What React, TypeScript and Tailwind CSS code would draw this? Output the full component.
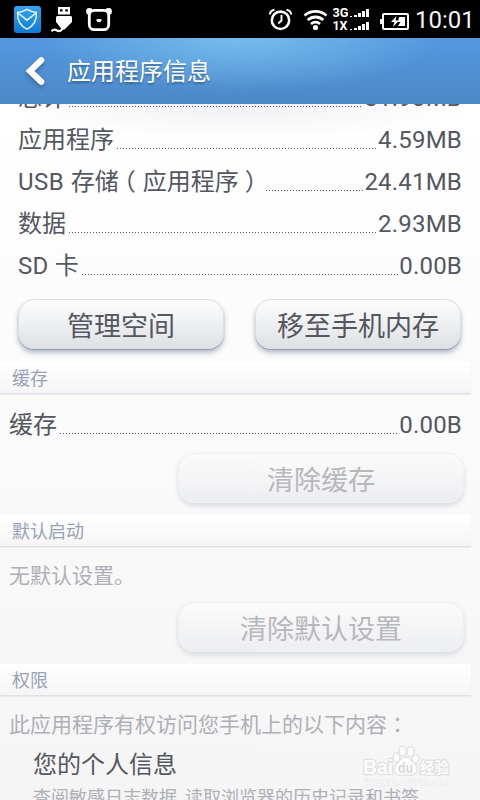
import type { ReactNode } from "react";

export default function App() {
  return (
    <div className="relative flex h-[800px] w-[480px] flex-col overflow-hidden bg-[#fafafa] font-['Roboto','Noto_Sans_CJK_SC',sans-serif] text-[#54575f]">
      <StatusBar />
      <TitleBar title="应用程序信息" />
      <main className="min-h-0 flex-1 overflow-hidden bg-[radial-gradient(ellipse_230px_36px_at_50%_0,#eff0f2,transparent),linear-gradient(#ffffff,#fbfbfb_40%,#f5f5f5)]">
        <div className="-mt-[27px] px-[18px]">
          <SizeRow label="总计" value="31.93MB" />
          <SizeRow label="应用程序" value="4.59MB" />
          <SizeRow
            label={
              <>
                <span className="tracking-[0.5px]">USB </span>
                存储
                <span className="inline-block -translate-x-[7px]">（</span>
                应用程序
                <span className="inline-block translate-x-[6px]">）</span>
              </>
            }
            value="24.41MB"
          />
          <SizeRow label="数据" value="2.93MB" />
          <SizeRow
            label={
              <>
                <span className="tracking-[0.3px]">SD </span>卡
              </>
            }
            value="0.00B"
          />
        </div>

        <div className="mt-3 flex justify-between pr-[19px] pl-[18px]">
          <Button className="w-[206px]">管理空间</Button>
          <Button className="w-[206px]">移至手机内存</Button>
        </div>

        <SectionHeader className="mt-[13px]">缓存</SectionHeader>
        <div className="mt-[10px] pr-[18px] pl-[9px]">
          <SizeRow label="缓存" value="0.00B" />
        </div>
        <div className="mt-[7px] flex justify-end pr-4">
          <Button disabled className="w-[286px]">
            清除缓存
          </Button>
        </div>

        <SectionHeader className="mt-3">默认启动</SectionHeader>
        <p className="mt-[14px] pl-[9px] text-[21px] leading-[30px] text-[#adb0b5]">
          无默认设置。
        </p>
        <div className="mt-[11px] flex justify-end pr-4">
          <Button disabled className="w-[286px]">
            清除默认设置
          </Button>
        </div>

        <SectionHeader className="mt-3">权限</SectionHeader>
        <p className="mt-[14px] h-[30px] pl-[9px] text-[21px] leading-[30px] whitespace-nowrap text-[#adb0b5]">
          此应用程序有权访问您手机上的以下内容
          <span
            className="font-['Noto_Sans_CJK_TC',sans-serif] leading-none"
            lang="zh-TW"
          >
            ：
          </span>
        </p>
        <h3 className="mt-[9px] pl-[33px] text-2xl leading-8 font-normal">
          您的个人信息
        </h3>
        <p className="mt-[5px] pl-[33px] text-lg leading-6 whitespace-nowrap text-[#adb0b5]">
          查阅敏感日志数据, 读取浏览器的历史记录和书签
        </p>
      </main>
      <Watermark />
    </div>
  );
}

function TitleBar({ title }: { title: string }) {
  return (
    <header className="flex h-[66px] shrink-0 items-center bg-[radial-gradient(ellipse_200px_54px_at_50%_0,#76bdec,transparent),linear-gradient(#5398e0,#4d88c7)] pl-[22px] text-white">
      <svg
        width="26"
        height="36"
        viewBox="0 0 26 36"
        fill="none"
        className="drop-shadow-[0_2px_2px_rgba(0,0,0,0.3)]"
      >
        <path
          d="M19.2 7.200 8 18l11.200 10.800"
          stroke="#fff"
          strokeWidth="6.200"
          strokeLinecap="round"
          strokeLinejoin="miter"
        />
      </svg>
      <h1 className="ml-[19px] pt-0.5 text-2xl font-normal [text-shadow:0_2px_2px_rgba(0,0,0,0.3)]">
        {title}
      </h1>
    </header>
  );
}

interface SizeRowProps {
  label: ReactNode;
  value: string;
}

function SizeRow({ label, value }: SizeRowProps) {
  return (
    <div className="flex h-[42px] text-2xl leading-[42px] whitespace-nowrap">
      <span>{label}</span>
      <span className="mt-[29px] ml-[3px] h-px flex-1 bg-[repeating-linear-gradient(90deg,#54575f_0_1px,transparent_1px_3px)]" />
      <span className="ml-px tracking-[0.2px]">{value}</span>
    </div>
  );
}

interface ButtonProps {
  children: ReactNode;
  className: string;
  disabled?: boolean;
}

function Button({ children, className, disabled }: ButtonProps) {
  const look = disabled
    ? "border-[#eeeff0] bg-linear-to-b from-[#fbfbfb] to-[#edeef0] text-[#b6b8bb] shadow-[0_3px_5px_rgba(90,105,130,0.2)]"
    : "border-[#dcdee1] bg-linear-to-b from-[#fdfdfd] to-[#dee1e5] text-[#54575f] shadow-[0_1px_1px_rgba(80,90,110,0.4),0_4px_5px_rgba(80,100,135,0.4)]";
  return (
    <button
      disabled={disabled}
      className={`h-[50px] rounded-[16px] border pt-[6px] text-[27px] leading-[42px] ${look} ${className}`}
    >
      {children}
    </button>
  );
}

function SectionHeader({
  children,
  className,
}: {
  children: ReactNode;
  className: string;
}) {
  return (
    <h2
      className={`h-8 w-[471px] border-b border-[#dde1e5] bg-linear-to-b from-white to-[#f5f5f5] pl-3 text-lg leading-[34px] font-normal text-[#97a2b8] shadow-[0_1px_1px_#e9edf1] ${className}`}
    >
      {children}
    </h2>
  );
}

function StatusBar() {
  return (
    <div className="flex h-[38px] shrink-0 items-center bg-black pl-[14px] text-white">
      {/* security guard */}
      <svg width="27" height="38" viewBox="14 0 27 38" fill="none">
        <defs>
          <linearGradient id="guard" x1="0" y1="0" x2="0" y2="1">
            <stop stopColor="#36a3f3" />
            <stop offset="1" stopColor="#0b7bd5" />
          </linearGradient>
        </defs>
        <rect x="14" y="6" width="27" height="27" rx="3" fill="url(#guard)" />
        <path
          d="M27 9.300c3 1.800 6 2.800 9.300 3.200.6 7-2.500 13.200-9.300 16.700-6.800-3.500-9.900-9.700-9.300-16.700 3.300-.4 6.300-1.400 9.300-3.200zM18 13l9 7.200 9-7.200"
          stroke="#e9f4fd"
          strokeWidth="1.500"
        />
      </svg>
      {/* usb */}
      <svg
        width="22"
        height="38"
        viewBox="51 0 22 38"
        fill="none"
        className="ml-[10px]"
      >
        <path d="M58 7h12v7.500H58z" fill="#fff" />
        <path d="M60 9.300h2.500v2.300H60zM65.300 9.300h2.500v2.300h-2.500z" fill="#000" />
        <path
          d="M57 16h14l1 1v5l-7.500 7.500H62L56 22v-5z"
          fill="#fff"
        />
        <path
          d="M51.500 31.300c2-2.300 4-1.800 5.500-.8 2.300 1.300 4.700.2 6-3"
          stroke="#fff"
          strokeWidth="2.300"
        />
      </svg>
      {/* bear */}
      <svg
        width="27"
        height="38"
        viewBox="86 0 27 38"
        fill="none"
        className="ml-[13px]"
      >
        <circle cx="89.500" cy="11.500" r="3.400" fill="#fff" />
        <circle cx="108.500" cy="11.500" r="3.400" fill="#fff" />
        <rect
          x="89.300"
          y="10.300"
          width="19.400"
          height="19.400"
          rx="5"
          fill="#000"
          stroke="#fff"
          strokeWidth="2.800"
        />
        <path d="M96 19.500q3-1 6 0-.8 2.700-3 2.700t-3-2.700z" fill="#fff" />
      </svg>

      {/* alarm */}
      <svg
        width="26"
        height="38"
        viewBox="268 0 26 38"
        fill="none"
        stroke="#fff"
        className="ml-[155px]"
      >
        <circle cx="280.500" cy="20.300" r="8.700" strokeWidth="2.600" />
        <path d="M281.500 15v5.500l-3.300 3" strokeWidth="1.900" />
        <path
          d="M269.800 14.500c.3-2.500 2-4.300 4.700-4.800M291.200 14.500c-.3-2.500-2-4.300-4.700-4.800"
          strokeWidth="2"
        />
      </svg>
      {/* wifi */}
      <svg
        width="25"
        height="38"
        viewBox="303 0 25 38"
        fill="none"
        stroke="#fff"
        strokeWidth="2.800"
        className="ml-[9px]"
      >
        <circle cx="315.500" cy="27.500" r="2.600" fill="#fff" stroke="none" />
        <path d="M304.500 15.500c6.500-5.400 15.500-5.400 22 0M307.700 20c4.500-4 11.100-4 15.600 0M311 24c2.700-2.200 6.300-2.200 9 0" />
      </svg>
      {/* dual sim signal */}
      <svg
        width="37"
        height="38"
        viewBox="333 0 37 38"
        fill="#fff"
        className="ml-[5px]"
      >
        <g className="font-['Roboto',sans-serif] text-[12px] font-bold">
          <text x="332.500" y="17" textLength="16" lengthAdjust="spacingAndGlyphs">
            3G
          </text>
          <text x="332.500" y="30" textLength="15" lengthAdjust="spacingAndGlyphs">
            1X
          </text>
        </g>
        <path d="M350 16h2v1h-2zM354 15h3v2h-3zM358 13h3v4h-3zM362 11h3v6h-3zM366 9h3v8h-3z" />
        <path d="M350 29h2v1h-2zM354 28h3v2h-3zM358 26h3v4h-3zM362 24h3v6h-3zM366 22h3v8h-3z" />
      </svg>
      {/* battery */}
      <svg
        width="30"
        height="38"
        viewBox="380 0 30 38"
        fill="none"
        className="ml-[10px]"
      >
        <rect
          x="383"
          y="14"
          width="25"
          height="15"
          rx="1"
          stroke="#fff"
          strokeWidth="2"
        />
        <path d="M380 19h3v5h-3z" fill="#fff" />
        <path d="M399 17h6v9h-7l2.500-4H398z" fill="#fff" />
        <path d="m396.500 16-5.500 6h3.500l-1.500 5 6-6.500h-3.500z" fill="#fff" />
      </svg>
      <span className="ml-[5px] pt-px text-2xl text-[#f4f4f4]">10:01</span>
    </div>
  );
}

function Watermark() {
  return (
    <svg
      width="96"
      height="48"
      viewBox="360 742 96 48"
      className="absolute top-[742px] left-[360px]"
      fill="#fcfcfc"
      stroke="#e0e0e1"
      strokeWidth="2.400"
      strokeLinejoin="round"
      paintOrder="stroke"
    >
      <text
        x="363"
        y="774"
        textLength="30"
        lengthAdjust="spacingAndGlyphs"
        className="font-['Liberation_Sans',sans-serif] text-[21px] font-bold"
      >
        Bai
      </text>
      <ellipse cx="396.500" cy="757.500" rx="2.800" ry="4" />
      <ellipse cx="402.500" cy="751" rx="3" ry="4.200" />
      <ellipse cx="410.500" cy="751.500" rx="3" ry="4.200" />
      <ellipse cx="415.800" cy="759" rx="2.800" ry="3.800" />
      <path d="M405.500 757.500c3.700 0 5.300 3.500 8 5.700 4.800 3.800 3.500 11-1.800 11.300h-12c-5.500-.3-6.500-7.500-1.700-11.300 2.700-2.200 3.800-5.700 7.500-5.700z" />
      <text
        x="398"
        y="773"
        textLength="15"
        lengthAdjust="spacingAndGlyphs"
        fill="#d8d8d9"
        stroke="none"
        className="font-['Liberation_Sans',sans-serif] text-[14px] font-bold"
      >
        du
      </text>
      <text
        x="420"
        y="773"
        textLength="29"
        lengthAdjust="spacingAndGlyphs"
        className="font-['Noto_Sans_CJK_SC',sans-serif] text-[15px] font-bold"
      >
        经验
      </text>
      <text
        x="364"
        y="785"
        textLength="86"
        lengthAdjust="spacingAndGlyphs"
        strokeWidth="1.200"
        stroke="#e9e9ea"
        className="font-['Liberation_Serif',serif] text-[11px]"
      >
        jingyan.baidu.com
      </text>
    </svg>
  );
}
